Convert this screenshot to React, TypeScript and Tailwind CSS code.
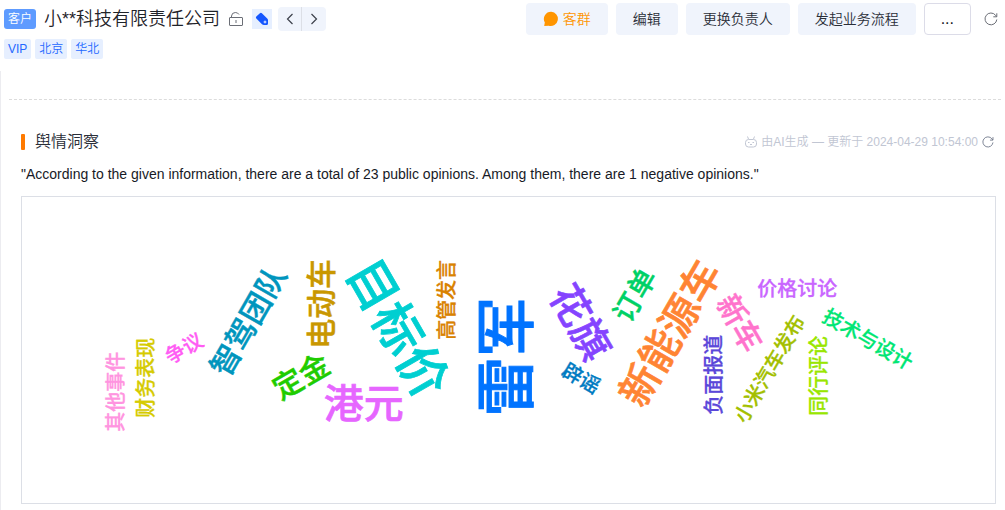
const tags = ["VIP", "北京", "华北"];

const actions = ["编辑", "更换负责人", "发起业务流程"];

// x / y is the centre of the word inside the 974 x 306 cloud
const words = [
  { text: "雷军", x: 484, y: 160, size: 60, angle: -90, color: "#0073ff" },
  { text: "目标价", x: 377, y: 131, size: 50, angle: 60, color: "#00cfd1" },
  { text: "港元", x: 342, y: 206, size: 40, angle: 0, color: "#e666ff" },
  { text: "新能源车", x: 648, y: 136, size: 40, angle: -60, color: "#ff8433" },
  { text: "花旗", x: 560, y: 125, size: 40, angle: 60, color: "#8544ff" },
  { text: "智驾团队", x: 226, y: 124, size: 30, angle: -60, color: "#0095bd" },
  { text: "电动车", x: 299, y: 107, size: 30, angle: -90, color: "#c99700" },
  { text: "定金", x: 279, y: 179, size: 30, angle: -30, color: "#1fcc00" },
  { text: "订单", x: 613, y: 98, size: 28, angle: -60, color: "#00d166" },
  { text: "新车", x: 719, y: 126, size: 30, angle: 60, color: "#ff73cc" },
  { text: "高管发言", x: 425, y: 103, size: 20, angle: -90, color: "#d98200" },
  { text: "辟谣", x: 560, y: 181, size: 20, angle: 30, color: "#007bc2" },
  { text: "负面报道", x: 692, y: 178, size: 20, angle: -90, color: "#5b47d9" },
  { text: "价格讨论", x: 776, y: 92, size: 20, angle: 0, color: "#c966ff" },
  { text: "小米汽车发布", x: 748, y: 172, size: 20, angle: -60, color: "#a3bf00" },
  { text: "同行评论", x: 797, y: 179, size: 20, angle: -90, color: "#99e600" },
  { text: "技术与设计", x: 847, y: 142, size: 20, angle: 30, color: "#00e673" },
  { text: "争议", x: 162, y: 151, size: 20, angle: -30, color: "#ff5cf4" },
  { text: "财务表现", x: 124, y: 181, size: 20, angle: -90, color: "#d6cb00" },
  { text: "其他事件", x: 93, y: 195, size: 20, angle: -90, color: "#ff94e0" },
];

function UnlockIcon() {
  return (
    <svg width="14" height="15" viewBox="0 0 14 15" fill="none" stroke="#6b6e76">
      <rect x="0.5" y="5.5" width="13" height="8" rx="0.5" />
      <path d="M2.500 5.500V4Q2.800.6 6.300.5q2.600 0 3.700 2M7 8v3" />
    </svg>
  );
}

function TagIcon() {
  return (
    <svg width="14" height="14" viewBox="0 0 14 14">
      <path
        d="M1.300 4.600 4.900 1.200q1-.9 2 0l5.300 5.300q.8.8.8 1.800v3.200q0 1.500-1.500 1.500H9q-1.200 0-2-.8L1.300 6.600q-.9-1 0-2Z"
        fill="#1456ff"
      />
      <path d="M10 8.600v2.800M8.600 10h2.800" stroke="#fff" strokeWidth="0.900" />
    </svg>
  );
}

function ArrowIcon({ direction }: { direction: "left" | "right" }) {
  return (
    <svg width="8" height="12" viewBox="0 0 8 12" fill="none" stroke="currentColor" strokeWidth="1.2">
      <path d={direction === "left" ? "M6.500 1 1.500 6l5 5" : "M1.500 1l5 5-5 5"} />
    </svg>
  );
}

function ChatIcon() {
  return (
    <svg width="16" height="16" viewBox="0 0 16 16" fill="#ff9500">
      <path d="M8.300.7a7.200 7.200 0 1 1-2.600 14.100L1.200 15l.6-3.600A7.200 7.200 0 0 1 8.300.7Z" />
    </svg>
  );
}

function RefreshIcon({ size }: { size: number }) {
  return (
    <svg width={size} height={size} viewBox="0 0 14 14" fill="none" stroke="currentColor">
      <path d="M12.800 7.500A5.900 5.900 0 1 1 11.600 3.300L12.600 4.600M12.800 1.300V4.800H9.300" />
    </svg>
  );
}

function RobotIcon() {
  return (
    <svg width="12" height="12" viewBox="0 0 12 12" fill="none" stroke="#c1c6d3">
      <path d="M2.500.5 3.500 3M9.500.5 8.500 3" />
      <rect x="0.500" y="3.500" width="11" height="7.500" rx="3" />
      <path d="M3 6.500h1.500M7.500 6.500h1.500M5 8.500h2" />
    </svg>
  );
}

function Header() {
  return (
    <header className="flex items-start justify-between pt-[3px] pl-1 pr-[7px]">
      <div>
        <div className="flex h-8 items-center">
          <span className="flex h-5 items-center rounded-[3px] bg-[#5e9bff] px-1 text-xs text-white">
            客户
          </span>
          <h1 className="ml-2 text-lg leading-6 text-[#1f2329]">小**科技有限责任公司</h1>
          <button className="ml-[9px]" aria-label="解锁">
            <UnlockIcon />
          </button>
          <button
            className="ml-[9px] flex size-5 items-center justify-center bg-[#e6efff]"
            aria-label="标签"
          >
            <TagIcon />
          </button>
          <div className="ml-1.5 flex h-6 overflow-hidden rounded-[4px] bg-[#f0f4fc] text-[#3c404a]">
            <button
              className="flex w-6 items-center justify-center border-r border-[#dcdfe6]"
              aria-label="上一个"
            >
              <ArrowIcon direction="left" />
            </button>
            <button className="flex w-6 items-center justify-center" aria-label="下一个">
              <ArrowIcon direction="right" />
            </button>
          </div>
        </div>
        <ul className="mt-1 flex gap-1">
          {tags.map((tag) => (
            <li
              key={tag}
              className="flex h-5 items-center rounded-[2px] bg-[#e6efff] px-1 text-xs text-[#2468ff]"
            >
              {tag}
            </li>
          ))}
        </ul>
      </div>

      <div className="flex items-center gap-2 text-sm text-[#2a2e38]">
        <button className="flex h-8 items-center gap-1 rounded-[4px] bg-[#f0f4fc] px-[17px] text-[#ff9500]">
          <ChatIcon />
          客群
        </button>
        {actions.map((action) => (
          <button key={action} className="h-8 rounded-[4px] bg-[#f0f4fc] px-[17px]">
            {action}
          </button>
        ))}
        <button
          className="h-8 rounded-[4px] border border-[#dcdce8] px-4 text-base leading-5 text-[#171a26]"
          aria-label="更多"
        >
          ...
        </button>
        <button className="ml-[5px] text-[#6b6e76]" aria-label="刷新">
          <RefreshIcon size={14} />
        </button>
      </div>
    </header>
  );
}

function WordCloud() {
  return (
    <div className="mt-3 border border-[#dcdfe6]">
      <svg className="block w-full" viewBox="0 0 974 306" role="img" aria-label="舆情词云">
        {words.map((word) => (
          <text
            key={word.text}
            transform={`translate(${word.x} ${word.y}) rotate(${word.angle})`}
            dy="0.38em"
            textAnchor="middle"
            fontSize={word.size}
            fontWeight={500}
            fill={word.color}
            stroke={word.color}
            strokeWidth={word.size * 0.015}
          >
            {word.text}
          </text>
        ))}
      </svg>
    </div>
  );
}

export default function App() {
  return (
    <div className="bg-white font-['Liberation_Sans','Noto_Sans_CJK_SC',sans-serif] font-[350]">
      <Header />
      <main className="mt-3 border-l border-[#ececf0] pb-1.5">
        <div className="ml-2 mr-1 h-[29px] border-b border-dashed border-[#dcdcdc]" />
        <section className="ml-5 mr-[9px] pt-[30px]">
          <div className="flex h-6 items-center justify-between">
            <div className="flex items-center">
              <span className="h-4 w-1 rounded-[1px] bg-[#ff7a00]" />
              <h2 className="ml-2.5 text-base leading-6 text-[#2a2e38]">舆情洞察</h2>
            </div>
            <div className="flex items-center gap-1 text-xs text-[#c1c6d3]">
              <RobotIcon />
              <span>由AI生成 — 更新于 2024-04-29 10:54:00</span>
              <button className="mr-0.5 text-[#6b7385]" aria-label="重新生成">
                <RefreshIcon size={12} />
              </button>
            </div>
          </div>
          <p className="mt-2.5 text-sm text-[#171a26]">
            "According to the given information, there are a total of 23 public opinions. Among
            them, there are 1 negative opinions."
          </p>
          <WordCloud />
        </section>
      </main>
    </div>
  );
}
